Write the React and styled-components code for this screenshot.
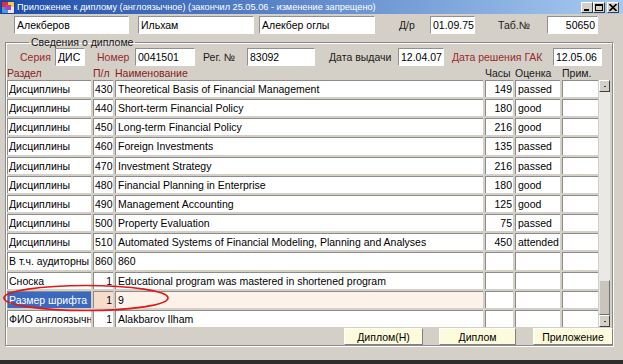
import React from 'react';
import styled, { createGlobalStyle } from 'styled-components';

const COLS = '84px 20px 368px 28px 45px 36px';

const rows = [
  ['Дисциплины', '430', 'Theoretical Basis of Financial Management', '149', 'passed'],
  ['Дисциплины', '440', 'Short-term Financial Policy', '180', 'good'],
  ['Дисциплины', '450', 'Long-term Financial Policy', '216', 'good'],
  ['Дисциплины', '460', 'Foreign Investments', '135', 'passed'],
  ['Дисциплины', '470', 'Investment Strategy', '216', 'passed'],
  ['Дисциплины', '480', 'Financial Planning in Enterprise', '180', 'good'],
  ['Дисциплины', '490', 'Management Accounting', '125', 'good'],
  ['Дисциплины', '500', 'Property Evaluation', '75', 'passed'],
  ['Дисциплины', '510', 'Automated Systems of Financial Modeling, Planning and Analyses', '450', 'attended'],
  ['В т.ч. аудиторны', '860', '860', '', ''],
  ['Сноска', '1', 'Educational program was mastered in shortened program', '', ''],
  ['Размер шрифта', '1', '9', '', '', true],
  ['ФИО англоязычн', '1', 'Alakbarov Ilham', '', ''],
];

function App() {
  return (
    <>
      <GlobalStyle />
      <Window>
        <TitleBar>
          <svg width="14" height="13" viewBox="0 0 14 13">
            <rect x="0" y="0" width="14" height="13" fill="#1a3f9c" />
            <rect x="1" y="1" width="6" height="5" fill="#e03030" />
            <rect x="7" y="1" width="6" height="5" fill="#f0d040" />
            <rect x="1" y="6" width="6" height="6" fill="#40a0e0" />
            <rect x="7" y="6" width="6" height="6" fill="#e8e8f0" />
            <rect x="4" y="4" width="6" height="5" fill="#b040c0" />
          </svg>
          <TitleText>Приложение к диплому (англоязычное) (закончил 25.05.06 - изменение запрещено)</TitleText>
          <WinButtons>
            <WinButton>
              <svg width="8" height="7" viewBox="0 0 8 7"><rect x="1" y="5" width="5" height="2" fill="#000" /></svg>
            </WinButton>
            <WinButton>
              <svg width="8" height="7" viewBox="0 0 8 7">
                <rect x="0.5" y="0.5" width="7" height="6" fill="none" stroke="#000" />
                <rect x="0" y="0" width="8" height="2" fill="#000" />
              </svg>
            </WinButton>
            <WinButton $ml={2}>
              <svg width="8" height="7" viewBox="0 0 8 7">
                <path d="M0.5 0 L7.5 7 M7.5 0 L0.5 7" stroke="#000" strokeWidth="1.6" />
              </svg>
            </WinButton>
          </WinButtons>
        </TitleBar>

        <TopRow>
          <Field $w={115} $ml={14}>Алекберов</Field>
          <Field $w={116} $ml={9}>Ильхам</Field>
          <Field $w={116} $ml={5}>Алекбер оглы</Field>
          <Label $w={31} $ml={24}>Д/р</Label>
          <Field $w={45}>01.09.75</Field>
          <Label $w={49} $ml={23}>Таб.№</Label>
          <Field $w={51} $right>50650</Field>
        </TopRow>

        <Group>
          <Legend>Сведения о дипломе</Legend>
          <DiplomaRow>
            <Label $w={35} $red>Серия</Label>
            <Field $w={30}>ДИС</Field>
            <Label $w={38} $ml={12} $red>Номер</Label>
            <Field $w={60}>0041501</Field>
            <Label $w={44} $ml={8}>Рег. №</Label>
            <Field $w={68}>83092</Field>
            <Label $w={69} $ml={14}>Дата выдачи</Label>
            <Field $w={46}>12.04.07</Field>
            <Label $w={101} $ml={8} $red>Дата решения ГАК</Label>
            <Field $w={49}>12.05.06</Field>
          </DiplomaRow>

          <HeadRow>
            <Head $red>Раздел</Head>
            <Head $red>П/л</Head>
            <Head $red>Наименование</Head>
            <Head>Часы</Head>
            <Head>Оценка</Head>
            <Head>Прим.</Head>
          </HeadRow>

          <TableArea>
            <Grid>
              {rows.map(([section, num, name, hours, mark, selected], i) => (
                <React.Fragment key={i}>
                  <Cell $first $selected={selected}>{section}</Cell>
                  <Cell $right $tint={selected ? '#f6dccb' : null}>{num}</Cell>
                  <Cell $tint={selected ? '#fdf2ea' : null}>{name}</Cell>
                  <Cell $right>{hours}</Cell>
                  <Cell>{mark}</Cell>
                  <Cell />
                </React.Fragment>
              ))}
            </Grid>
            <ScrollBar>
              <ScrollButton><Dot /></ScrollButton>
              <ScrollTrack />
              <ScrollThumb />
              <ScrollButton><Dot /></ScrollButton>
            </ScrollBar>
          </TableArea>

          <ButtonRow>
            <FormButton $w={79}>Диплом(Н)</FormButton>
            <FormButton $w={77} $ml={16}>Диплом</FormButton>
            <FormButton $w={80} $ml={17}>Приложение</FormButton>
          </ButtonRow>
        </Group>

        <Mark width="623" height="364">
          <ellipse cx="86" cy="298" rx="82" ry="12.5" fill="none" stroke="#e01818" strokeWidth="1.7" />
        </Mark>
      </Window>
    </>
  );
}

export default App;

const GlobalStyle = createGlobalStyle`
  body {
    margin: 0;
    background: #d4d0c8;
    font-family: "Liberation Sans", Arial, sans-serif;
  }
`;

const Window = styled.div`
  position: relative;
  width: 623px;
  height: 364px;
  background: #d4d0c8;
  overflow: hidden;
  display: flex;
  flex-direction: column;
  box-sizing: border-box;
  border-bottom: 4px solid #2e2e2e;
  font-size: 10.5px;
  color: #000;
`;

const TitleBar = styled.div`
  height: 14px;
  flex-shrink: 0;
  display: flex;
  align-items: center;
  padding-left: 1px;
  background: linear-gradient(to right, #1d4ca8, #a6caf0);
`;

const TitleText = styled.span`
  margin-left: 2px;
  color: #ffffff;
  font-size: 9.2px;
  line-height: 14px;
  white-space: nowrap;
`;

const WinButtons = styled.div`
  margin-left: auto;
  margin-right: 4px;
  display: flex;
`;

const WinButton = styled.div`
  width: 12px;
  height: 11px;
  margin-left: ${(p) => p.$ml || 0}px;
  box-sizing: border-box;
  display: flex;
  align-items: center;
  justify-content: center;
  background: #d4d0c8;
  border: 1px solid;
  border-color: #ffffff #404040 #404040 #ffffff;
`;

const TopRow = styled.div`
  display: flex;
  height: 18px;
  margin-top: 2px;
  flex-shrink: 0;
`;

const Field = styled.div`
  width: ${(p) => p.$w}px;
  margin-left: ${(p) => p.$ml || 0}px;
  flex-shrink: 0;
  box-sizing: border-box;
  background: #ffffff;
  border: 1px solid;
  border-color: #909090 #ffffff #ffffff #909090;
  padding: 0 2px;
  line-height: 16px;
  white-space: nowrap;
  overflow: hidden;
  text-align: ${(p) => (p.$right ? 'right' : 'left')};
`;

const Label = styled.div`
  width: ${(p) => p.$w}px;
  margin-left: ${(p) => p.$ml || 0}px;
  flex-shrink: 0;
  line-height: 18px;
  white-space: nowrap;
  color: ${(p) => (p.$red ? '#9a2a2a' : '#1a1a1a')};
`;

const Group = styled.fieldset`
  margin: 2px 0 0 5px;
  width: 608px;
  padding: 0;
  box-sizing: border-box;
  border: 1px solid #8a8a8a;
  box-shadow: 1px 1px 0 #ffffff, inset 1px 1px 0 #ffffff;
  min-width: 0;
`;

const Legend = styled.legend`
  margin-left: 23px;
  padding: 0 2px;
  height: 12px;
  font-size: 10.5px;
  line-height: 12px;
  color: #1a1a1a;
`;

const DiplomaRow = styled.div`
  display: flex;
  height: 18px;
  padding-left: 14px;
`;

const HeadRow = styled.div`
  display: grid;
  grid-template-columns: ${COLS};
  column-gap: 2px;
  height: 14px;
  margin-left: 1px;
`;

const Head = styled.div`
  line-height: 14px;
  white-space: nowrap;
  color: ${(p) => (p.$red ? '#8a1c1c' : '#1a1a1a')};
`;

const TableArea = styled.div`
  display: flex;
  margin-left: 1px;
`;

const Grid = styled.div`
  display: grid;
  grid-template-columns: ${COLS};
  grid-auto-rows: 17.17px;
  column-gap: 2px;
  row-gap: 2px;
`;

const Cell = styled.div`
  box-sizing: border-box;
  background: ${(p) => (p.$selected ? '#3c69c0' : p.$tint || '#ffffff')};
  color: ${(p) => (p.$selected ? '#ffffff' : '#000000')};
  border-top: 1px solid #8c8c8c;
  border-left: 1px solid #8c8c8c;
  padding: 0 ${(p) => (p.$right ? '1px' : p.$first ? '1px' : '2px')};
  line-height: 16px;
  white-space: nowrap;
  overflow: hidden;
  text-align: ${(p) => (p.$right ? 'right' : 'left')};
`;

const ScrollBar = styled.div`
  width: 11px;
  margin-left: 1px;
  display: flex;
  flex-direction: column;
  background: #ebe9e5;
`;

const ScrollButton = styled.div`
  height: 12px;
  box-sizing: border-box;
  display: flex;
  align-items: center;
  justify-content: center;
  background: #d4d0c8;
  border: 1px solid;
  border-color: #ffffff #404040 #404040 #ffffff;
`;

const Dot = styled.span`
  width: 2px;
  height: 1px;
  background: #404040;
`;

const ScrollTrack = styled.div`
  flex: 1;
`;

const ScrollThumb = styled.div`
  height: 35px;
  box-sizing: border-box;
  background: #c9c5bd;
  border: 1px solid;
  border-color: #e8e6e2 #707070 #707070 #e8e6e2;
`;

const ButtonRow = styled.div`
  display: flex;
  justify-content: flex-end;
  height: 17px;
  margin: 1px -1px 0 0;
`;

const FormButton = styled.button`
  width: ${(p) => p.$w}px;
  margin-left: ${(p) => p.$ml || 0}px;
  height: 17px;
  padding: 0;
  box-sizing: border-box;
  background: #fefbdc;
  border: 1px solid;
  border-color: #ffffff #808080 #808080 #ffffff;
  font-family: "Liberation Sans", Arial, sans-serif;
  font-size: 10.5px;
  color: #000;
`;

const Mark = styled.svg`
  position: absolute;
  left: 0;
  top: 0;
  pointer-events: none;
`;
